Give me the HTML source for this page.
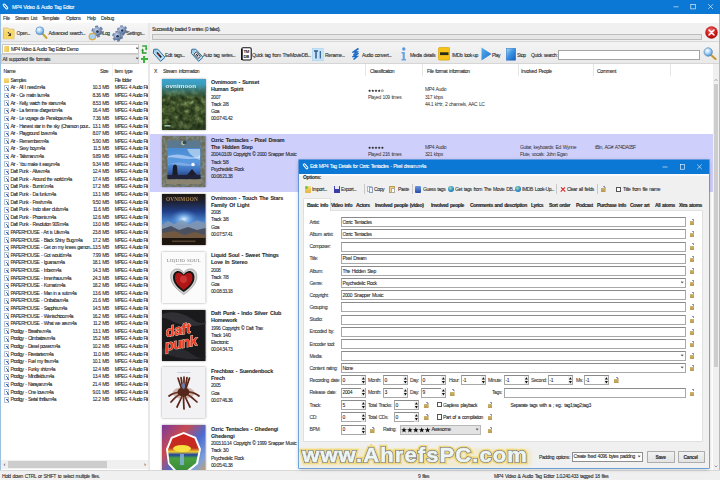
<!DOCTYPE html>
<html><head><meta charset="utf-8">
<style>
*{box-sizing:border-box;margin:0;padding:0}
html,body{width:720px;height:480px;overflow:hidden;background:#f0f0f0;font-family:"Liberation Sans",sans-serif;font-size:5px;letter-spacing:-0.38px;word-spacing:0.8px;color:#2a2a2a;position:relative}
.a{position:absolute}
.t{position:absolute;white-space:nowrap;line-height:5px}
.t,.st,.fr span{-webkit-text-stroke:0.08px currentColor}
/* title bar */
#title{left:0;top:0;width:720px;height:13.5px;background:#0a78d4}
#title .tt{left:12px;top:5.1px;color:#fff;font-size:5.2px;letter-spacing:-0.4px}
#menu{left:0;top:13.5px;width:720px;height:9px;background:#fff}
#menu .t{top:2.5px}
#winl{left:0;top:13.5px;width:1px;height:467px;background:#9cc0e0}
#winr{left:719px;top:13.5px;width:1px;height:467px;background:#9cc0e0}
/* left toolbar */
#ltb{left:1px;top:22.5px;width:147px;height:19.5px;background:linear-gradient(#f7f7f7,#ececec);border-bottom:1px solid #dadada}
#ltb .t{top:8px;}
#rtb1{left:150px;top:22.5px;width:569px;height:19.5px;background:#f0f0f0;border-bottom:1px solid #dadada}
#combo1{left:2px;top:43.5px;width:137px;height:10px;background:#fff;border:0.6px solid #c8c8c8}
#combo2{left:1px;top:53.5px;width:138px;height:10px;background:#e4e4e4;border:0.6px solid #d0d0d0}
.dd{position:absolute;width:2.4px;height:2.4px;border-right:0.6px solid #606060;border-bottom:0.6px solid #606060;transform:rotate(45deg)}
/* left list */
#llist{left:1px;top:64px;width:147px;height:405.5px;background:#fff}
#lhdr{left:0;top:0;width:147px;height:12px;background:#fff}
.fr{position:absolute;left:0;width:147px;height:7.6px}
.fr .fn,.fr .fs,.fr .ft{position:absolute;top:1.3px;white-space:nowrap;line-height:5px;}
.fr .fn{left:9.4px;letter-spacing:-0.55px}
.fr .fs{right:39.2px;letter-spacing:-0.45px}
.fr .ft{left:113.8px;letter-spacing:-0.6px}
.fold{position:absolute;left:3.4px;top:1.1px;width:5px;height:5px;background:linear-gradient(#f8e08a,#eec44e);border-radius:0.4px}
.note{position:absolute;left:3.4px;top:0.9px;width:4.6px;height:5.8px;background:linear-gradient(#fff,#fff) 0 0/100% 100%;border:0.4px solid #b8c4d4}
.note:after{content:"";position:absolute;left:0.6px;top:1px;width:2.6px;height:3.6px;background:linear-gradient(60deg,transparent 0 38%,#3a6cc0 40% 62%,transparent 64%)}
#hscroll{left:1px;top:460px;width:147px;height:9px;background:#f0f0f0}
/* splitter */
#split{left:148px;top:22.5px;width:2px;height:447px;background:#e8e8e8}
/* right toolbar */
#rtb2{left:150px;top:42.5px;width:569px;height:21.5px;background:linear-gradient(#f4f4f4,#e9e9e9);border-bottom:1px solid #d6d6d6}
#rtb2 .t{top:10.2px}
/* stream list */
#slist{left:150px;top:64px;width:563px;height:406px;background:#fff;overflow:hidden}
#shdr{left:0;top:0;width:563px;height:13px;background:#fff}
#shdr .t{top:4.8px;}
.hsep{position:absolute;top:0;width:0.7px;height:13px;background:#e5e5e5}
.sr{position:absolute;left:0;width:563px;height:57.75px;background:#fff}
.sr.sel{background:#cfcffc}
.art{position:absolute;left:12.4px;top:2.5px;width:43.5px;height:51px;filter:drop-shadow(0.7px 0.9px 0.8px rgba(0,0,0,.4))}
.st{position:absolute;left:61px;white-space:nowrap;line-height:5px;letter-spacing:-0.46px}
.st b{font-size:5.4px;letter-spacing:-0.17px}
.sc{position:absolute;white-space:nowrap;line-height:5px;color:#333;letter-spacing:-0.42px}
#vscroll{left:713px;top:77px;width:6px;height:393px;background:#f0f0f0}
/* status bar */
#status{left:0;top:469.5px;width:720px;height:10.5px;background:#f0f0f0;border-top:0.6px solid #d8d8d8}
#status .t{top:3px;}

.fld{background:#fff;border:0.6px solid #a8a8a8;border-top-color:#8a8a8a}
.lb{color:#3a3a3a}
.br{position:absolute;width:4.6px;height:6.6px;background:linear-gradient(#c0b060,#b88a3a) 0 2.2px/4.6px 4.4px no-repeat,linear-gradient(45deg,transparent 0 40%,#8a8ab8 41% 70%,transparent 71%) 2.4px 0/2.6px 2.6px no-repeat;opacity:.9}
.btn{background:linear-gradient(#f2f2f2,#e2e2e2);border:0.6px solid #adadad;border-radius:0.6px}
.tab{font-weight:bold;letter-spacing:-0.38px;-webkit-text-stroke:0.15px #222}
.a1{background:radial-gradient(ellipse at 30% 55%,rgba(120,150,90,.7),transparent 35%),radial-gradient(ellipse at 70% 70%,rgba(100,130,80,.6),transparent 35%),linear-gradient(#47a6c6 0%,#3f93ab 14%,#3f7358 26%,#355a36 45%,#2c4a2c 70%,#203722 100%)}
.a2{background:radial-gradient(circle at 71% 55%,#e8f0ff 0 5%,transparent 7%),linear-gradient(160deg,transparent 60%,#1a1c2c 61%) 0 0/100% 100% no-repeat,linear-gradient(#3a66c0,#5d8fe0 40%,#3c6ad0 70%,#2a2a50 100%);border:5px solid #8f8570;border-bottom-width:7px}
.a3{background:radial-gradient(ellipse at 50% 45%,#9cc4f0 0,#4a7ad0 25%,transparent 60%),linear-gradient(#2a2018 0%,#24345a 20%,#3a68c0 45%,#6a8ab0 60%,#7a6a50 72%,#4a3a28 88%,#1a140e 100%)}
.a4{background:radial-gradient(ellipse at 50% 57%,#c02020 0 22%,#181818 24% 27%,#c8c8c8 29% 33%,#fff 35%),#fff}
.a5{background:radial-gradient(ellipse at 40% 20%,#444 0,#1a1a1a 40%),#161616}
.a6{background:radial-gradient(ellipse at 50% 55%,#3a1a12 0,#7a4a34 14%,rgba(170,120,100,.6) 28%,transparent 40%),linear-gradient(#f4f4f6,#ececee)}
.a7{background:radial-gradient(ellipse at 45% 50%,#f8e040 0 10%,#e03020 18%,#2aa040 30%,#fff 36% 40%,transparent 42%),linear-gradient(135deg,#6a3aa0,#c84a60 30%,#4a6ac8 60%,#a0a040)}
.wm{left:302.2px;top:442.2px;font-size:22px;line-height:28px;font-weight:bold;letter-spacing:1.1px;transform:scaleY(0.88);transform-origin:50% 50%;word-spacing:0;stroke-linejoin:round}
</style></head><body>
<div id="title" class="a">
  <div class="a" style="left:3.5px;top:3px;width:3px;height:7px;border:1px solid #fff;border-radius:2px;transform:rotate(-40deg)"></div>
  <div class="t tt">MP4 Video &amp; Audio Tag Editor</div>
  <svg class="a" style="left:670px;top:0" width="50" height="13.5" viewBox="0 0 50 13.5"><path d="M3.5 6.8 H8.5" stroke="#fff" stroke-width=".6"/><rect x="20.8" y="4.3" width="4.6" height="4.6" fill="none" stroke="#fff" stroke-width=".6"/><path d="M38.2 4.2 L43 9 M43 4.2 L38.2 9" stroke="#fff" stroke-width=".6"/></svg>
</div>
<div id="menu" class="a">
  <div class="t" style="left:3px">File</div>
  <div class="t" style="left:15px">Stream List</div>
  <div class="t" style="left:42px">Template</div>
  <div class="t" style="left:66px">Options</div>
  <div class="t" style="left:87px">Help</div>
  <div class="t" style="left:101px">Debug</div>
</div>
<div id="winl" class="a"></div>
<div id="ltb" class="a">
  <svg class="a" style="left:0;top:0" width="147" height="19.5" viewBox="0 0 147 19.5"><defs><radialGradient id="gr" cx=".4" cy=".35" r=".7"><stop offset="0" stop-color="#c8d6ea"/><stop offset=".6" stop-color="#7890b8"/><stop offset="1" stop-color="#4a5e88"/></radialGradient><radialGradient id="mg2" cx=".4" cy=".35" r=".7"><stop offset="0" stop-color="#ffffff"/><stop offset=".5" stop-color="#a6d2f4"/><stop offset="1" stop-color="#3e8ad0"/></radialGradient><linearGradient id="fo" x1="0" y1="0" x2="0" y2="1"><stop offset="0" stop-color="#fbe9a0"/><stop offset="1" stop-color="#e8b830"/></linearGradient></defs>
  <path d="M2.5 5 H7 L8 6.2 H13 V15.8 H2.5Z" fill="url(#fo)" stroke="#c89a28" stroke-width=".5"/>
  <path d="M3.5 7.5 H13.8 L12.8 16 H2.5Z" fill="#f6d868" opacity=".9"/>
  <path d="M7 9 L9.5 12.5 M7.3 12.6 L9.5 12.5 L9.6 10.3" stroke="#3a3020" stroke-width="1" fill="none"/>
  <path d="M40.5 9.5 L45.5 15" stroke="#c8a438" stroke-width="2" stroke-linecap="round"/>
  <circle cx="38.8" cy="7.8" r="4" fill="url(#mg2)" stroke="#5a8ab8" stroke-width=".6"/>
  
  
  
  <circle cx="96.4" cy="8.6" r="5.15" fill="none" stroke="#6a80a8" stroke-width="1.68" stroke-dasharray="3.08 2.24"/><circle cx="96.4" cy="8.6" r="4.48" fill="url(#gr)"/><circle cx="96.4" cy="8.6" r="1.40" fill="#2a3450"/><circle cx="91.4" cy="13.6" r="3.3" fill="#a8d0f0" stroke="#e0a838" stroke-width="1.1"/><circle cx="121.2" cy="7.4" r="4.51" fill="none" stroke="#6a80a8" stroke-width="1.47" stroke-dasharray="2.70 1.96"/><circle cx="121.2" cy="7.4" r="3.92" fill="url(#gr)"/><circle cx="121.2" cy="7.4" r="1.23" fill="#2a3450"/><circle cx="116.6" cy="13.2" r="4.69" fill="none" stroke="#6a80a8" stroke-width="1.53" stroke-dasharray="2.81 2.04"/><circle cx="116.6" cy="13.2" r="4.08" fill="url(#gr)"/><circle cx="116.6" cy="13.2" r="1.27" fill="#2a3450"/></svg>
  <div class="t" style="left:15.5px">Open...</div>
  <div class="t" style="left:47.5px">Advanced search...</div>
  <div class="t" style="left:101.5px">Log</div>
  <div class="t" style="left:125.5px">Settings...</div>
</div>
<div id="rtb1" class="a">
  <div class="t" style="left:2px;top:4.5px;letter-spacing:-0.56px">Successfully loaded 9 entries (0 failed).</div>
  <div class="a" style="left:1.5px;top:11.5px;width:550px;height:5.5px;background:#e6e6e6;border:0.6px solid #bdbdbd"></div>
  <svg class="a" style="left:554.5px;top:3px" width="13" height="13" viewBox="0 0 13 13"><defs><radialGradient id="rx" cx=".45" cy=".35" r=".65"><stop offset="0" stop-color="#f47a7a"/><stop offset=".6" stop-color="#d41c1c"/><stop offset="1" stop-color="#a00c0c"/></radialGradient></defs><circle cx="6.5" cy="6.5" r="6" fill="url(#rx)" stroke="#b01010" stroke-width=".4"/><path d="M4 4 L9 9 M9 4 L4 9" stroke="#fff" stroke-width="1.5" stroke-linecap="round"/></svg>
</div>
<div id="combo1" class="a">
  <div class="a" style="left:1.2px;top:1.4px;width:4.6px;height:6.6px;background:linear-gradient(90deg,#f6dc80,#eec44e);border-radius:0.4px"></div>
  <div class="t" style="left:8px;top:2.2px;letter-spacing:-0.55px;word-spacing:0.6px">MP4 Video &amp; Audio Tag Editor Demo</div>
  <div class="dd" style="left:132.5px;top:2.8px"></div>
</div>
<div id="combo2" class="a">
  <div class="t" style="left:0.5px;top:2.3px;">All supported file formats</div>
  <div class="dd" style="left:133.5px;top:2.8px"></div>
</div>
<svg class="a" style="left:140.5px;top:44.5px" width="7" height="9" viewBox="0 0 7 9"><path d="M1.2 1 H5.2 L5.2 4.2" fill="none" stroke="#34a834" stroke-width="1.5"/><path d="M3.8 3.6 L5.2 5.4 L6.6 3.6Z" fill="#34a834"/><path d="M5.6 8 H1.6 L1.6 4.8" fill="none" stroke="#2c962c" stroke-width="1.5"/><path d="M0.2 5.4 L1.6 3.6 L3 5.4Z" fill="#2c962c"/></svg>
<div class="a" style="left:143.2px;top:55.5px;width:1.8px;height:7px;background:#3bb43b"></div>
<div class="a" style="left:140.6px;top:58.1px;width:7px;height:1.8px;background:#3bb43b"></div>
<div id="llist" class="a">
  <div id="lhdr" class="a">
    <div class="t" style="left:2.5px;top:4.8px">Name</div>
    <div class="t" style="left:99px;top:4.8px">Size</div>
    <div class="t" style="left:113.5px;top:4.8px">Item type</div>
    <div class="a" style="left:111px;top:0;width:0.6px;height:12px;background:#f2f2f2"></div>
    
  </div>
  <div class="a" style="left:0;top:12.6px;width:147px;height:340px">
<div class="fr" style="top:0.00px"><i class="fold"></i><span class="fn">Samples</span><span class="fs"></span><span class="ft">File folder</span></div>
<div class="fr" style="top:7.60px"><i class="note"></i><span class="fn">Air - All I need.m4a</span><span class="fs">10.3 MB</span><span class="ft">MPEG 4 Audio File</span></div>
<div class="fr" style="top:15.21px"><i class="note"></i><span class="fn">Air - Ce matin la.m4a</span><span class="fs">8.36 MB</span><span class="ft">MPEG 4 Audio File</span></div>
<div class="fr" style="top:22.81px"><i class="note"></i><span class="fn">Air - Kelly, watch the stars.m4a</span><span class="fs">8.53 MB</span><span class="ft">MPEG 4 Audio File</span></div>
<div class="fr" style="top:30.42px"><i class="note"></i><span class="fn">Air - La femme d'argent.m4a</span><span class="fs">16.4 MB</span><span class="ft">MPEG 4 Audio File</span></div>
<div class="fr" style="top:38.02px"><i class="note"></i><span class="fn">Air - Le voyage de Penelope.m4a</span><span class="fs">7.36 MB</span><span class="ft">MPEG 4 Audio File</span></div>
<div class="fr" style="top:45.63px"><i class="note"></i><span class="fn">Air - Harvest star in the sky (Chanson pour...</span><span class="fs">13.1 MB</span><span class="ft">MPEG 4 Audio File</span></div>
<div class="fr" style="top:53.23px"><i class="note"></i><span class="fn">Air - Playground love.m4a</span><span class="fs">8.07 MB</span><span class="ft">MPEG 4 Audio File</span></div>
<div class="fr" style="top:60.84px"><i class="note"></i><span class="fn">Air - Remember.m4a</span><span class="fs">5.90 MB</span><span class="ft">MPEG 4 Audio File</span></div>
<div class="fr" style="top:68.45px"><i class="note"></i><span class="fn">Air - Sexy boy.m4a</span><span class="fs">11.5 MB</span><span class="ft">MPEG 4 Audio File</span></div>
<div class="fr" style="top:76.05px"><i class="note"></i><span class="fn">Air - Talisman.m4a</span><span class="fs">9.89 MB</span><span class="ft">MPEG 4 Audio File</span></div>
<div class="fr" style="top:83.65px"><i class="note"></i><span class="fn">Air - You make it easy.m4a</span><span class="fs">9.34 MB</span><span class="ft">MPEG 4 Audio File</span></div>
<div class="fr" style="top:91.26px"><i class="note"></i><span class="fn">Daft Punk - Alive.m4a</span><span class="fs">12.4 MB</span><span class="ft">MPEG 4 Audio File</span></div>
<div class="fr" style="top:98.87px"><i class="note"></i><span class="fn">Daft Punk - Around the world.m4a</span><span class="fs">17.4 MB</span><span class="ft">MPEG 4 Audio File</span></div>
<div class="fr" style="top:106.47px"><i class="note"></i><span class="fn">Daft Punk - Burnin'.m4a</span><span class="fs">17.2 MB</span><span class="ft">MPEG 4 Audio File</span></div>
<div class="fr" style="top:114.08px"><i class="note"></i><span class="fn">Daft Punk - Da funk.m4a</span><span class="fs">13.1 MB</span><span class="ft">MPEG 4 Audio File</span></div>
<div class="fr" style="top:121.68px"><i class="note"></i><span class="fn">Daft Punk - Fresh.m4a</span><span class="fs">9.50 MB</span><span class="ft">MPEG 4 Audio File</span></div>
<div class="fr" style="top:129.28px"><i class="note"></i><span class="fn">Daft Punk - Indo silver club.m4a</span><span class="fs">11.6 MB</span><span class="ft">MPEG 4 Audio File</span></div>
<div class="fr" style="top:136.89px"><i class="note"></i><span class="fn">Daft Punk - Phoenix.m4a</span><span class="fs">12.6 MB</span><span class="ft">MPEG 4 Audio File</span></div>
<div class="fr" style="top:144.49px"><i class="note"></i><span class="fn">Daft Punk - Revolution 909.m4a</span><span class="fs">13.0 MB</span><span class="ft">MPEG 4 Audio File</span></div>
<div class="fr" style="top:152.10px"><i class="note"></i><span class="fn">PAPERHOUSE - Art is Life.m4a</span><span class="fs">23.8 MB</span><span class="ft">MPEG 4 Audio File</span></div>
<div class="fr" style="top:159.71px"><i class="note"></i><span class="fn">PAPERHOUSE - Black Shiny Bug.m4a</span><span class="fs">17.2 MB</span><span class="ft">MPEG 4 Audio File</span></div>
<div class="fr" style="top:167.31px"><i class="note"></i><span class="fn">PAPERHOUSE - Get on my knees gamon...</span><span class="fs">13.5 MB</span><span class="ft">MPEG 4 Audio File</span></div>
<div class="fr" style="top:174.92px"><i class="note"></i><span class="fn">PAPERHOUSE - Got would.m4a</span><span class="fs">7.99 MB</span><span class="ft">MPEG 4 Audio File</span></div>
<div class="fr" style="top:182.52px"><i class="note"></i><span class="fn">PAPERHOUSE - Iguana.m4a</span><span class="fs">18.1 MB</span><span class="ft">MPEG 4 Audio File</span></div>
<div class="fr" style="top:190.13px"><i class="note"></i><span class="fn">PAPERHOUSE - Inber.m4a</span><span class="fs">14.3 MB</span><span class="ft">MPEG 4 Audio File</span></div>
<div class="fr" style="top:197.73px"><i class="note"></i><span class="fn">PAPERHOUSE - Innenhaus.m4a</span><span class="fs">24.3 MB</span><span class="ft">MPEG 4 Audio File</span></div>
<div class="fr" style="top:205.34px"><i class="note"></i><span class="fn">PAPERHOUSE - Kumari.m4a</span><span class="fs">18.2 MB</span><span class="ft">MPEG 4 Audio File</span></div>
<div class="fr" style="top:212.94px"><i class="note"></i><span class="fn">PAPERHOUSE - Man in a suit.m4a</span><span class="fs">13.6 MB</span><span class="ft">MPEG 4 Audio File</span></div>
<div class="fr" style="top:220.54px"><i class="note"></i><span class="fn">PAPERHOUSE - Onibaba.m4a</span><span class="fs">21.6 MB</span><span class="ft">MPEG 4 Audio File</span></div>
<div class="fr" style="top:228.15px"><i class="note"></i><span class="fn">PAPERHOUSE - Sapphis.m4a</span><span class="fs">14.5 MB</span><span class="ft">MPEG 4 Audio File</span></div>
<div class="fr" style="top:235.76px"><i class="note"></i><span class="fn">PAPERHOUSE - Wenischtoo.m4a</span><span class="fs">16.2 MB</span><span class="ft">MPEG 4 Audio File</span></div>
<div class="fr" style="top:243.36px"><i class="note"></i><span class="fn">PAPERHOUSE - What we are.m4a</span><span class="fs">11.2 MB</span><span class="ft">MPEG 4 Audio File</span></div>
<div class="fr" style="top:250.96px"><i class="note"></i><span class="fn">Prodigy - Breathe.m4a</span><span class="fs">13.1 MB</span><span class="ft">MPEG 4 Audio File</span></div>
<div class="fr" style="top:258.57px"><i class="note"></i><span class="fn">Prodigy - Climbatize.m4a</span><span class="fs">15.2 MB</span><span class="ft">MPEG 4 Audio File</span></div>
<div class="fr" style="top:266.17px"><i class="note"></i><span class="fn">Prodigy - Diesel power.m4a</span><span class="fs">10.2 MB</span><span class="ft">MPEG 4 Audio File</span></div>
<div class="fr" style="top:273.78px"><i class="note"></i><span class="fn">Prodigy - Firestarter.m4a</span><span class="fs">11.0 MB</span><span class="ft">MPEG 4 Audio File</span></div>
<div class="fr" style="top:281.39px"><i class="note"></i><span class="fn">Prodigy - Fuel my fire.m4a</span><span class="fs">10.1 MB</span><span class="ft">MPEG 4 Audio File</span></div>
<div class="fr" style="top:288.99px"><i class="note"></i><span class="fn">Prodigy - Funky shit.m4a</span><span class="fs">12.4 MB</span><span class="ft">MPEG 4 Audio File</span></div>
<div class="fr" style="top:296.60px"><i class="note"></i><span class="fn">Prodigy - Mindfields.m4a</span><span class="fs">13.4 MB</span><span class="ft">MPEG 4 Audio File</span></div>
<div class="fr" style="top:304.20px"><i class="note"></i><span class="fn">Prodigy - Narayan.m4a</span><span class="fs">21.4 MB</span><span class="ft">MPEG 4 Audio File</span></div>
<div class="fr" style="top:311.80px"><i class="note"></i><span class="fn">Prodigy - One love.m4a</span><span class="fs">9.01 MB</span><span class="ft">MPEG 4 Audio File</span></div>
<div class="fr" style="top:319.41px"><i class="note"></i><span class="fn">Prodigy - Serial thrilla.m4a</span><span class="fs">12.2 MB</span><span class="ft">MPEG 4 Audio File</span></div>
  </div>
</div>
<div id="hscroll" class="a">
  <div class="a" style="left:7px;top:1.2px;width:99px;height:6.5px;background:#cdcdcd"></div>
  <div class="t" style="left:2.4px;top:1.6px;font-size:6px;color:#505050">&#8249;</div>
  <div class="t" style="left:143px;top:1.6px;font-size:6px;color:#505050">&#8250;</div>
</div>
<div id="split" class="a"></div>
<div id="rtb2" class="a">
  <svg class="a" style="left:1.5px;top:4.5px" width="13" height="15" viewBox="0 0 13 15"><g transform="rotate(-42 6.5 7.5)"><path d="M3.5 3 L6.5 0.5 L9.5 3 L9.5 14 L3.5 14Z" fill="#b6dcf4" stroke="#2d6c9c" stroke-width="0.9"/><circle cx="6.5" cy="3" r="0.8" fill="#fff" stroke="#2d6c9c" stroke-width=".4"/><rect x="5.8" y="5" width="1.6" height="6.5" fill="#1e1e1e"/><rect x="5.8" y="7.3" width="1.6" height="1.2" fill="#c03030"/></g></svg>
  <div class="t" style="left:15px">Edit tags...</div>
  <svg class="a" style="left:39.5px;top:4.5px" width="13" height="15" viewBox="0 0 13 15"><g transform="rotate(-42 6.5 7.5)"><path d="M3.5 3 L6.5 0.5 L9.5 3 L9.5 14 L3.5 14Z" fill="#b6dcf4" stroke="#2d6c9c" stroke-width="0.9"/><circle cx="6.5" cy="3" r="0.8" fill="#fff" stroke="#2d6c9c" stroke-width=".4"/><rect x="4.8" y="5.5" width="3.4" height="6" fill="#f4f4f4" stroke="#222" stroke-width=".8"/><rect x="5.9" y="7" width="1.2" height="3" fill="#222"/></g></svg>
  <div class="t" style="left:53px">Auto tag series...</div>
  <svg class="a" style="left:90.5px;top:4.2px" width="11" height="14" viewBox="0 0 11 14"><rect x="0.8" y="0.8" width="9.4" height="12.2" rx="1.2" fill="#fff" stroke="#111" stroke-width="1.1"/><path d="M0.8 13 L0.8 2" stroke="#111" stroke-width="1.6"/><text x="2.6" y="6" font-family="Liberation Sans" font-size="4.2" font-weight="bold" fill="#111" letter-spacing="-0.3">TM</text><text x="2.6" y="10.6" font-family="Liberation Sans" font-size="4.2" font-weight="bold" fill="#111" letter-spacing="-0.3">DB</text></svg>
  <div class="t" style="left:102px">Quick tag from TheMovieDB...</div>
  <svg class="a" style="left:162.3px;top:5px" width="11.5" height="13" viewBox="0 0 11.5 13"><rect x="0.3" y="0.3" width="10.9" height="12.4" fill="#c6e4f8" stroke="#a8d0ec" stroke-width=".6"/><path d="M2 3 H6 M4 3 V10.5" stroke="#2e5e8e" stroke-width="1.5"/><path d="M8.3 3 V10.5" stroke="#2e5e8e" stroke-width="1.2"/></svg>
  <div class="t" style="left:175px">Rename...</div>
  <svg class="a" style="left:201.5px;top:4.8px" width="8" height="14" viewBox="0 0 8 14"><path d="M6.5 1.5 L1.5 5 L5 5 L1.5 8" stroke="#1e6cc8" stroke-width="1.6" fill="none"/><path d="M6.5 6 L1.5 9.5 L5 9.5 L1.5 12.5" stroke="#1e6cc8" stroke-width="1.6" fill="none"/></svg>
  <div class="t" style="left:212px">Audio convert...</div>
  <svg class="a" style="left:249.5px;top:4.2px" width="7" height="14" viewBox="0 0 7 14"><circle cx="3.8" cy="2" r="1.7" fill="#5e98dc"/><path d="M1.5 5 H4.8 V12 H6 V13.5 H1.5 V12 H2.7 V6.4 H1.5Z" fill="#6aa2e2"/></svg>
  <div class="t" style="left:260px">Media details</div>
  <svg class="a" style="left:287.5px;top:4.5px" width="12.5" height="13.5" viewBox="0 0 12.5 13.5"><rect x="0.4" y="0.4" width="11.7" height="12.7" rx="1.5" fill="#f6c21a" stroke="#d9a200" stroke-width=".7"/><rect x="2" y="5.3" width="8.5" height="2.8" fill="#2a2a1a"/></svg>
  <div class="t" style="left:302px">IMDb look-up</div>
  <svg class="a" style="left:330.5px;top:4.5px" width="11" height="14" viewBox="0 0 11 14"><defs><linearGradient id="pl" x1="0" y1="0" x2="1" y2="1"><stop offset="0" stop-color="#5ab0f0"/><stop offset="1" stop-color="#1a6ccc"/></linearGradient></defs><path d="M0.5 0.5 L10.5 7 L0.5 13.5Z" fill="url(#pl)"/></svg>
  <div class="t" style="left:342px">Play</div>
  <svg class="a" style="left:355.5px;top:5.8px" width="10" height="12.5" viewBox="0 0 10 12.5"><defs><linearGradient id="sp" x1="0" y1="0" x2="1" y2="1"><stop offset="0" stop-color="#a8daf8"/><stop offset=".45" stop-color="#3c94e4"/><stop offset="1" stop-color="#1458b8"/></linearGradient></defs><rect x="0.3" y="0.3" width="9.4" height="11.9" fill="url(#sp)" stroke="#2a70c0" stroke-width=".5"/></svg>
  <div class="t" style="left:367px">Stop</div>
  <div class="t" style="left:381px">Quick search:</div>
  <div class="a" style="left:408px;top:7.5px;width:142px;height:9.5px;background:#fff;border:0.6px solid #a4a4a4"></div>
  <svg class="a" style="left:552.5px;top:4.8px" width="14" height="13" viewBox="0 0 14 13"><defs><radialGradient id="mg" cx=".4" cy=".35" r=".7"><stop offset="0" stop-color="#ffffff"/><stop offset=".5" stop-color="#a6d2f4"/><stop offset="1" stop-color="#3e8ad0"/></radialGradient></defs><path d="M7.5 7.5 L12.5 12" stroke="#c49a30" stroke-width="2.2" stroke-linecap="round"/><circle cx="5.2" cy="5" r="4.2" fill="url(#mg)" stroke="#5a8ab8" stroke-width=".7"/></svg>

</div>
<div id="slist" class="a">
  <div id="shdr" class="a">
    <div class="t" style="left:4px">X</div>
    <div class="t" style="left:13px">Stream information</div>
    <div class="t" style="left:220px">Classification</div>
    <div class="t" style="left:277px">File format information</div>
    <div class="t" style="left:371px">Involved People</div>
    <div class="t" style="left:447px">Comment</div>
    
    <div class="hsep" style="left:215px"></div>
    <div class="hsep" style="left:272px"></div>
    <div class="hsep" style="left:368px"></div>
    <div class="hsep" style="left:443px"></div>
    <div class="hsep" style="left:520px"></div>
  </div>
  <div class="a" style="left:0;top:0;width:563px;height:406px">
<div class="sr" style="top:12.00px">
<svg class="art" width="43.5" height="51" viewBox="0 0 87 102" preserveAspectRatio="none"><defs>
<linearGradient id="g1" x1="0" y1="0" x2="0" y2="1"><stop offset="0" stop-color="#3aa4d0"/><stop offset=".12" stop-color="#3c9ab8"/><stop offset=".26" stop-color="#3c8080" stop-opacity=".5"/><stop offset=".4" stop-color="#2c4a2c" stop-opacity="0"/><stop offset=".85" stop-color="#1a2a18" stop-opacity=".1"/><stop offset="1" stop-color="#1a2a18" stop-opacity=".5"/></linearGradient>
<filter id="tx1" x="0" y="0" width="100%" height="100%" color-interpolation-filters="sRGB"><feTurbulence type="fractalNoise" baseFrequency="0.09" numOctaves="3" seed="5"/><feColorMatrix values="1 0 0 0 0  1 0 0 0 0  1 0 0 0 0  0 0 0 0 1"/><feComponentTransfer><feFuncR type="table" tableValues="0.06 0.14 0.24 0.42 0.75"/><feFuncG type="table" tableValues="0.1 0.2 0.32 0.5 0.8"/><feFuncB type="table" tableValues="0.05 0.1 0.16 0.3 0.65"/><feFuncA type="table" tableValues="1 1"/></feComponentTransfer><feComposite in2="SourceGraphic" operator="in"/></filter>
</defs>
<rect width="87" height="102" fill="#34502e"/>
<rect y="14" width="87" height="88" filter="url(#tx1)"/>
<rect width="87" height="102" fill="url(#g1)"/>
<text x="7" y="17" font-family="Liberation Sans" font-size="12.5" fill="#d8f0f4" font-weight="bold" letter-spacing="0.2">ovnimoon</text>
<rect x="5" y="92" width="12" height="3" fill="#cfe" opacity=".7"/>
</svg>
<div class="st" style="top:4.2px"><b>Ovnimoon - Sunset</b></div>
<div class="st" style="top:11.2px"><b>Human Spirit</b></div>
<div class="st" style="top:18.5px">2007</div>
<div class="st" style="top:25.8px">Track 2/8</div>
<div class="st" style="top:33.0px">Goa</div>
<div class="st" style="top:40.2px">00:07:41.42</div>
<svg class="a" style="left:218px;top:12.6px" width="16.5" height="3.6" viewBox="0 0 16.5 3.6"><polygon points="1.60,0.20 1.98,1.27 3.12,1.31 2.22,2.00 2.54,3.09 1.60,2.45 0.66,3.09 0.98,2.00 0.08,1.31 1.22,1.27" fill="#222"/><polygon points="4.80,0.20 5.18,1.27 6.32,1.31 5.42,2.00 5.74,3.09 4.80,2.45 3.86,3.09 4.18,2.00 3.28,1.31 4.42,1.27" fill="#222"/><polygon points="8.00,0.20 8.38,1.27 9.52,1.31 8.62,2.00 8.94,3.09 8.00,2.45 7.06,3.09 7.38,2.00 6.48,1.31 7.62,1.27" fill="#222"/><polygon points="11.20,0.20 11.58,1.27 12.72,1.31 11.82,2.00 12.14,3.09 11.20,2.45 10.26,3.09 10.58,2.00 9.68,1.31 10.82,1.27" fill="#222"/><polygon points="14.40,0.35 14.75,1.31 15.78,1.35 14.97,1.99 15.25,2.97 14.40,2.40 13.55,2.97 13.83,1.99 13.02,1.35 14.05,1.31" fill="none" stroke="#444" stroke-width=".35"/></svg>
<div class="sc" style="top:18.5px;left:218px">Played 109 times</div>
<div class="sc" style="top:11.2px;left:275px">MP4 Audio</div>
<div class="sc" style="top:18.5px;left:275px">317 kbps</div>
<div class="sc" style="top:25.7px;left:275px">44.1 kHz, 2 channels, AAC LC</div>
</div>
<div class="sr sel" style="top:69.75px">
<svg class="art" width="43.5" height="51" viewBox="0 0 87 102" preserveAspectRatio="none"><defs>
<linearGradient id="g2" x1="0" y1="0" x2="0" y2="1"><stop offset="0" stop-color="#4a8ad0"/><stop offset=".45" stop-color="#5a9ae0"/><stop offset=".75" stop-color="#3a6ab8"/><stop offset="1" stop-color="#202850"/></linearGradient>
<filter id="tx2" x="0" y="0" width="100%" height="100%" color-interpolation-filters="sRGB"><feTurbulence type="fractalNoise" baseFrequency="0.15" numOctaves="2" seed="7"/><feColorMatrix values="0 0 0 0 0.55  0 0 0 0 0.75  0 0 0 0 0.8  0 0 0 -2 1.3"/><feComposite in2="SourceGraphic" operator="in"/></filter>
</defs>
<rect width="87" height="102" fill="#6e6a58"/>
<rect width="87" height="102" filter="url(#tx2)" opacity=".5"/>
<rect x="10" y="9" width="67" height="15" fill="#5a7890"/>
<circle cx="43" cy="14" r="4.5" fill="#c8d0a0"/><circle cx="45" cy="13" r="3.8" fill="#3a4a58"/>
<rect x="11" y="24" width="66" height="62" fill="url(#g2)"/>
<path d="M12 40 Q30 34 50 40 T76 38 L76 44 Q55 48 30 44 T12 46Z" fill="#cfe0ff" opacity=".6"/><path d="M50 26 L76 26 L76 48 Q64 44 56 36 Q52 30 50 26Z" fill="#e8f2ff" opacity=".55"/>
<path d="M12 56 Q35 50 55 56 T76 54 L76 58 Q50 62 30 58 T12 60Z" fill="#a8c4f4" opacity=".5"/>
<circle cx="62" cy="57" r="3.5" fill="#f4f8ff"/>
<path d="M20 86 L22 60 Q26 54 30 60 L32 86Z" fill="#1a1c28"/>
<path d="M44 86 L60 66 L76 86Z" fill="#1c1e2c"/>
<rect x="11" y="78" width="66" height="8" fill="#20223a"/>
<rect x="8" y="88" width="71" height="8" fill="#8a8470"/>
</svg>
<div class="st" style="top:4.2px"><b>Ozric Tentacles - Pixel Dream</b></div>
<div class="st" style="top:11.2px"><b>The Hidden Step</b></div>
<div class="st" style="top:18.5px">2004.03.09 Copyright &copy; 2000 Snapper Music</div>
<div class="st" style="top:25.8px">Track 5/8</div>
<div class="st" style="top:33.0px">Psychedelic Rock</div>
<div class="st" style="top:40.2px">00:08:21.38</div>
<svg class="a" style="left:218px;top:12.6px" width="16.5" height="3.6" viewBox="0 0 16.5 3.6"><polygon points="1.60,0.20 1.98,1.27 3.12,1.31 2.22,2.00 2.54,3.09 1.60,2.45 0.66,3.09 0.98,2.00 0.08,1.31 1.22,1.27" fill="#222"/><polygon points="4.80,0.20 5.18,1.27 6.32,1.31 5.42,2.00 5.74,3.09 4.80,2.45 3.86,3.09 4.18,2.00 3.28,1.31 4.42,1.27" fill="#222"/><polygon points="8.00,0.20 8.38,1.27 9.52,1.31 8.62,2.00 8.94,3.09 8.00,2.45 7.06,3.09 7.38,2.00 6.48,1.31 7.62,1.27" fill="#222"/><polygon points="11.20,0.20 11.58,1.27 12.72,1.31 11.82,2.00 12.14,3.09 11.20,2.45 10.26,3.09 10.58,2.00 9.68,1.31 10.82,1.27" fill="#222"/><polygon points="14.40,0.20 14.78,1.27 15.92,1.31 15.02,2.00 15.34,3.09 14.40,2.45 13.46,3.09 13.78,2.00 12.88,1.31 14.02,1.27" fill="#222"/></svg>
<div class="sc" style="top:18.5px;left:218px">Played 216 times</div>
<div class="sc" style="top:11.2px;left:275px">MP4 Audio</div>
<div class="sc" style="top:18.5px;left:275px">321 kbps</div>
<div class="sc" style="top:11.2px;left:370px">Guitar, keyboards: Ed Wynne</div>
<div class="sc" style="top:18.5px;left:370px">Flute, vocals: John Egan</div>
<div class="sc" style="top:11.2px;left:445px">tBin, AG# A74DA05F</div>
</div>
<div class="sr" style="top:127.50px">
<svg class="art" width="43.5" height="51" viewBox="0 0 87 102" preserveAspectRatio="none"><defs>
<linearGradient id="g3" x1="0" y1="0" x2="0" y2="1"><stop offset="0" stop-color="#201810"/><stop offset=".16" stop-color="#1e2236"/><stop offset=".35" stop-color="#22408a"/><stop offset=".55" stop-color="#4a88d0"/><stop offset=".7" stop-color="#6a80a0"/><stop offset="1" stop-color="#2a2018"/></linearGradient>
<radialGradient id="r3"><stop offset="0" stop-color="#e0f0ff"/><stop offset=".35" stop-color="#80b8f0" stop-opacity=".8"/><stop offset="1" stop-color="#3a6ac0" stop-opacity="0"/></radialGradient>
</defs>
<rect width="87" height="102" fill="url(#g3)"/>
<ellipse cx="44" cy="50" rx="30" ry="20" fill="url(#r3)"/>
<path d="M0 62 L12 54 L24 60 L40 52 L55 60 L70 53 L87 58 L87 90 L0 90Z" fill="#8a9ab0" opacity=".75"/>
<path d="M0 70 L18 64 L34 72 L52 66 L70 72 L87 68 L87 90 L0 90Z" fill="#4a5060"/>
<path d="M0 78 L25 74 L45 82 L65 76 L87 82 L87 90 L0 90Z" fill="#7a5a38" opacity=".8"/>
<rect y="88" width="87" height="14" fill="#1e160e"/>
<text x="8" y="14" font-family="Liberation Serif" font-size="10.5" fill="#b08a50" font-weight="bold" letter-spacing="0.3">OVNIMOON</text>
<rect x="20" y="93" width="47" height="3" fill="#7a6048" opacity=".6"/>
</svg>
<div class="st" style="top:4.2px"><b>Ovnimoon - Touch The Stars</b></div>
<div class="st" style="top:11.2px"><b>Family Of Light</b></div>
<div class="st" style="top:18.5px">2008</div>
<div class="st" style="top:25.8px">Track 3/8</div>
<div class="st" style="top:33.0px">Goa</div>
<div class="st" style="top:40.2px">00:07:57.41</div>
</div>
<div class="sr" style="top:185.25px">
<svg class="art" width="43.5" height="51" viewBox="0 0 87 102" preserveAspectRatio="none"><defs></defs>
<rect width="87" height="102" fill="#fbfbfb"/>
<text x="43.5" y="20" text-anchor="middle" font-family="Liberation Serif" font-size="10" fill="#7a7a7a" letter-spacing="0.4">LIQUID SOUL</text>
<rect x="28" y="24" width="31" height="1.2" fill="#bbb"/>
<g transform="translate(43.5 58) scale(0.78 0.85) translate(-43.5 -58)">
<path d="M43.5 90 C20 74 10 62 10 47 C10 34 20 28 30 30 C36 31 41 35 43.5 39 C46 35 51 31 57 30 C67 28 77 34 77 47 C77 62 67 74 43.5 90Z" fill="#d0d0d0" stroke="#8a8a8a" stroke-width="1.5"/>
<path d="M43.5 84 C25 72 16 62 16 49 C16 38 25 33 32 35 C37 36 41 39 43.5 43 C46 39 50 36 55 35 C62 33 71 38 71 49 C71 62 62 72 43.5 84Z" fill="#161616"/>
<path d="M43.5 79 C28 69 21 61 21 50 C21 41 28 38 33 39 C38 40 41 43 43.5 46 C46 43 49 40 54 39 C59 38 66 41 66 50 C66 61 59 69 43.5 79Z" fill="#b01616"/>
<ellipse cx="43" cy="54" rx="9" ry="9" fill="#e04848" opacity=".6"/>
</g>
</svg>
<div class="st" style="top:4.2px"><b>Liquid Soul - Sweet Things</b></div>
<div class="st" style="top:11.2px"><b>Love In Stereo</b></div>
<div class="st" style="top:18.5px">2008</div>
<div class="st" style="top:25.8px">Track 7/8</div>
<div class="st" style="top:33.0px">Goa</div>
<div class="st" style="top:40.2px">00:08:33.18</div>
</div>
<div class="sr" style="top:243.00px">
<svg class="art" width="43.5" height="51" viewBox="0 0 87 102" preserveAspectRatio="none"><defs></defs>
<rect width="87" height="102" fill="#1a1a1c"/>
<path d="M0 8 Q30 -2 60 18 T87 12 L87 28 Q50 38 20 22 T0 32Z" fill="#3c3c40" opacity=".7"/>
<path d="M0 78 Q30 68 60 88 T87 82 L87 96 Q50 102 20 92 T0 100Z" fill="#35353a" opacity=".6"/>
<g transform="rotate(-10 43 52)" font-family="Liberation Sans" font-style="italic" font-weight="bold" fill="#f03a24" stroke="#f8d8c0" stroke-width="1.6" paint-order="stroke fill">
<text x="9" y="48" font-size="29" letter-spacing="-0.8">daft</text>
<text x="3" y="75" font-size="29" letter-spacing="-1.2">punk</text>
</g>
</svg>
<div class="st" style="top:4.2px"><b>Daft Punk - Indo Silver Club</b></div>
<div class="st" style="top:11.2px"><b>Homework</b></div>
<div class="st" style="top:18.5px">1996 Copyright &copy; Daft Trax</div>
<div class="st" style="top:25.8px">Track 14/0</div>
<div class="st" style="top:33.0px">Electronic</div>
<div class="st" style="top:40.2px">00:04:34.73</div>
</div>
<div class="sr" style="top:300.75px">
<svg class="art" width="43.5" height="51" viewBox="0 0 87 102" preserveAspectRatio="none"><defs></defs>
<rect width="87" height="102" fill="#f2f2f4"/>
<rect x="30" y="10" width="27" height="1.5" fill="#b8c8d8"/>
<g stroke="#5a2418" stroke-width="3.4" fill="none" stroke-linecap="round">
<path d="M43 50 Q30 56 18 70"/><path d="M43 50 Q58 58 70 70"/><path d="M43 50 Q24 50 14 58"/><path d="M43 50 Q62 48 74 58"/>
<path d="M43 52 Q36 68 30 80"/><path d="M43 52 Q50 68 56 80"/><path d="M43 52 Q43 70 44 84"/>
<path d="M40 46 L32 22"/><path d="M44 46 L44 20"/><path d="M47 46 L55 22"/><path d="M42 46 L38 21"/><path d="M46 46 L50 21"/>
</g>
<ellipse cx="43" cy="50" rx="12" ry="9" fill="#3a1410"/><ellipse cx="43" cy="52" rx="22" ry="12" fill="#8a4a30" opacity=".35"/>
<ellipse cx="43" cy="38" rx="3" ry="6" fill="#6a90d0" opacity=".8"/>
</svg>
<div class="st" style="top:4.2px"><b>Frechbax - Suendenbock</b></div>
<div class="st" style="top:11.2px"><b>Frech</b></div>
<div class="st" style="top:18.5px">2005</div>
<div class="st" style="top:25.8px">Goa</div>
<div class="st" style="top:33.0px">00:07:46.36</div>
</div>
<div class="sr" style="top:358.50px">
<svg class="art" width="43.5" height="51" viewBox="0 0 87 102" preserveAspectRatio="none"><defs>
<linearGradient id="g7" x1="0" y1="0" x2="1" y2="1"><stop offset="0" stop-color="#7a3aa0"/><stop offset=".3" stop-color="#c84a50"/><stop offset=".55" stop-color="#4a6ad0"/><stop offset=".8" stop-color="#80a0d8"/><stop offset="1" stop-color="#d8a040"/></linearGradient>
<linearGradient id="g7b" x1="0" y1="0" x2="0" y2="1"><stop offset="0" stop-color="#d02020"/><stop offset=".38" stop-color="#c03020"/><stop offset=".48" stop-color="#f0d030"/><stop offset=".56" stop-color="#2040a0"/><stop offset=".65" stop-color="#48a040"/><stop offset="1" stop-color="#3a8a3a"/></linearGradient>
</defs>
<rect width="87" height="102" fill="url(#g7)"/>
<polygon points="43.5,14 68,24 78,48 72,78 50,96 28,96 12,78 8,48 18,24" fill="#fff"/>
<polygon points="43.5,18 65,27 74,49 68,76 48,92 30,92 15,76 12,49 21,27" fill="url(#g7b)"/>
<ellipse cx="40" cy="47" rx="18" ry="7" fill="#f8e040"/>
<rect x="36" y="58" width="8" height="22" fill="#8ab0e0" opacity=".8"/>
</svg>
<div class="st" style="top:4.2px"><b>Ozric Tentacles - Ghedengi</b></div>
<div class="st" style="top:11.2px"><b>Ghedengi</b></div>
<div class="st" style="top:18.5px">2003.10.14 Copyright &copy; 1999 Snapper Music</div>
<div class="st" style="top:25.8px">Track 3/0</div>
<div class="st" style="top:33.0px">Psychedelic Rock</div>
<div class="st" style="top:40.2px">00:05:41.38</div>
</div>
  </div>
</div>
<div id="vscroll" class="a">
  <div class="a" style="left:0.8px;top:7px;width:4.6px;height:283px;background:#cdcdcd"></div>
  <svg class="a" style="left:0;top:0" width="6" height="393" viewBox="0 0 6 393"><path d="M1.6 3.8 L3 2.4 L4.4 3.8" fill="none" stroke="#606060" stroke-width=".6"/><path d="M1.6 388.6 L3 390 L4.4 388.6" fill="none" stroke="#606060" stroke-width=".6"/></svg>
</div>
<div id="winr" class="a"></div>
<div id="status" class="a">
  <div class="t" style="left:2px">Hold down CTRL or SHIFT to select multiple files.</div>
  <div class="t" style="left:418px">9 files</div>
  <div class="t" style="left:494px">MP4 Video &amp; Audio Tag Editor 1.0.240.433 tagged 18 files</div>
</div>
<div id="dlg" class="a" style="left:298.5px;top:159.5px;width:410px;height:308px;background:#f0f0f0;box-shadow:0 0 0 0.7px #3d8bd6,0 1px 4px rgba(0,0,0,.3)">
<div class="a" style="left:0;top:0;width:410px;height:14px;background:#0a78d4"></div>
<div class="a" style="left:0;top:14px;width:410px;height:2px;background:#fafafa"></div>
<div class="a" style="left:5px;top:3.5px;width:2.6px;height:6.5px;border:0.9px solid #fff;border-radius:1.5px;transform:rotate(-40deg)"></div>
<div class="t" style="left:11.5px;top:4.8px;color:#fff;font-size:5.2px;letter-spacing:-0.47px">Edit MP4 Tag Details for Ozric Tentacles - Pixel dream.m4a</div>
<svg class="a" style="left:359.5px;top:0" width="50" height="13.5" viewBox="0 0 50 13.5"><path d="M4.5 7 H9.5" stroke="#fff" stroke-width=".6"/><rect x="22.3" y="4.6" width="4.2" height="4.6" fill="none" stroke="#fff" stroke-width=".6"/><path d="M39.2 4.5 L43.8 9.1 M43.8 4.5 L39.2 9.1" stroke="#fff" stroke-width=".6"/></svg>
<div class="t" style="left:4.5px;top:15.1px;font-weight:bold;letter-spacing:-0.3px">Options:</div>
<div class="a" style="left:6.0px;top:26.6px;width:6px;height:6.5px;background:linear-gradient(#f6e07a,#e2b43a);border-radius:1px"></div><div class="a" style="left:6.5px;top:26.3px;width:3px;height:3.4px;border-radius:50%;background:#7cc040"></div>
<div class="t" style="left:13.5px;top:27.5px">Import...</div>
<div class="a" style="left:35.5px;top:26.6px;width:6px;height:6.8px;background:#3c3ca8;border-radius:0.5px"></div><div class="a" style="left:36.8px;top:26.6px;width:3.4px;height:2.6px;background:#e8e8f8"></div>
<div class="t" style="left:42.5px;top:27.5px">Export...</div>
<div class="a" style="left:65.0px;top:24.8px;width:0.6px;height:10px;background:#c8c8c8"></div>
<div class="a" style="left:68.5px;top:26.1px;width:4.8px;height:6px;background:#fff;border:0.5px solid #a8b8c8"></div><div class="a" style="left:70.0px;top:27.9px;width:4.8px;height:6px;background:#eef4fb;border:0.5px solid #8ca0b8"></div>
<div class="t" style="left:75.5px;top:27.5px">Copy</div>
<div class="a" style="left:90.5px;top:26.1px;width:5.6px;height:7.6px;background:#ecd08a;border:0.5px solid #b89a50;border-radius:0.6px"></div><div class="a" style="left:92.5px;top:28.1px;width:4px;height:5.6px;background:#fff;border:0.5px solid #aaa"></div>
<div class="t" style="left:99.5px;top:27.5px">Paste</div>
<div class="a" style="left:113.5px;top:24.8px;width:0.6px;height:10px;background:#c8c8c8"></div>
<div class="a" style="left:116.5px;top:26.6px;width:5.5px;height:6.6px;background:linear-gradient(#6a98e0,#2a4aa8);border-radius:1px"></div>
<div class="t" style="left:124.5px;top:27.5px">Guess tags</div>
<div class="a" style="left:149.5px;top:26.1px;width:6px;height:6px;border-radius:50%;background:radial-gradient(circle at 40% 35%,#9ee0a0,#2a8ad0 55%,#1a5a9a)"></div>
<div class="t" style="left:156.5px;top:27.5px">Get tags from The Movie DB...</div>
<div class="a" style="left:216.5px;top:26.1px;width:6px;height:6px;border-radius:50%;background:radial-gradient(circle at 40% 35%,#9ee0a0,#2a8ad0 55%,#1a5a9a)"></div>
<div class="t" style="left:223.5px;top:27.5px">IMDB Look-Up...</div>
<div class="a" style="left:257.5px;top:24.8px;width:0.6px;height:10px;background:#c8c8c8"></div>
<div class="a" style="left:261.0px;top:29.6px;width:6px;height:1.4px;background:#d42020;transform:rotate(45deg)"></div><div class="a" style="left:261.0px;top:29.6px;width:6px;height:1.4px;background:#d42020;transform:rotate(-45deg)"></div>
<div class="t" style="left:268.5px;top:27.5px">Clear all fields</div>
<div class="a" style="left:298.5px;top:24.8px;width:0.6px;height:10px;background:#c8c8c8"></div>
<i class="br" style="left:302.5px;top:26.6px"></i>
<div class="a" style="left:317.0px;top:27.1px;width:5.4px;height:5.4px;background:#fff;border:0.6px solid #555"></div>
<div class="t" style="left:324.5px;top:27.5px">Title from file name</div>
<div class="a" style="left:5.0px;top:39.3px;width:26px;height:13px;background:#fff;box-shadow:0 0 0 0.6px #d6d6d6"></div>
<div class="t tab" style="left:8.5px;top:43.7px">Basic info</div>
<div class="t tab" style="left:32.5px;top:43.7px">Video info</div>
<div class="t tab" style="left:57.5px;top:43.7px">Actors</div>
<div class="t tab" style="left:76.5px;top:43.7px">Involved people (video)</div>
<div class="t tab" style="left:132.5px;top:43.7px">Involved people</div>
<div class="t tab" style="left:171.5px;top:43.7px">Comments and description</div>
<div class="t tab" style="left:232.5px;top:43.7px">Lyrics</div>
<div class="t tab" style="left:250.5px;top:43.7px">Sort order</div>
<div class="t tab" style="left:277.5px;top:43.7px">Podcast</div>
<div class="t tab" style="left:298.5px;top:43.7px">Purchase info</div>
<div class="t tab" style="left:331.5px;top:43.7px">Cover art</div>
<div class="t tab" style="left:356.5px;top:43.7px">All atoms</div>
<div class="t tab" style="left:380.5px;top:43.7px">Xtra atoms</div>
<div class="a" style="left:5.5px;top:51.5px;width:398px;height:230px;background:#fff;box-shadow:0 0 0 0.6px #d6d6d6"></div>
<div class="a" style="left:5.4px;top:50.0px;width:26.2px;height:2px;background:#fff"></div>
<div class="t lb" style="left:11.0px;top:60.3px">Artist:</div>
<div class="a fld" style="left:42.5px;top:57.7px;width:344.5px;height:10px"></div>
<div class="t" style="left:44.0px;top:60.3px">Ozric Tentacles</div>
<i class="br" style="left:391.0px;top:59.5px"></i>
<div class="t lb" style="left:11.0px;top:72.48px">Album artist:</div>
<div class="a fld" style="left:42.5px;top:69.88px;width:344.5px;height:10px"></div>
<div class="t" style="left:44.0px;top:72.48px">Ozric Tentacles</div>
<i class="br" style="left:391.0px;top:71.68px"></i>
<div class="t lb" style="left:11.0px;top:84.66px">Composer:</div>
<div class="a fld" style="left:42.5px;top:82.06px;width:344.5px;height:10px"></div>
<i class="br" style="left:391.0px;top:83.86px"></i>
<div class="t lb" style="left:11.0px;top:96.84px">Title:</div>
<div class="a fld" style="left:42.5px;top:94.24px;width:344.5px;height:10px"></div>
<div class="t" style="left:44.0px;top:96.84px">Pixel Dream</div>
<i class="br" style="left:391.0px;top:96.04px"></i>
<div class="t lb" style="left:11.0px;top:109.02px">Album:</div>
<div class="a fld" style="left:42.5px;top:106.42px;width:344.5px;height:10px"></div>
<div class="t" style="left:44.0px;top:109.02px">The Hidden Step</div>
<i class="br" style="left:391.0px;top:108.22px"></i>
<div class="t lb" style="left:11.0px;top:121.2px">Genre:</div>
<div class="a fld" style="left:42.5px;top:118.6px;width:344.5px;height:10px"></div>
<div class="t" style="left:44.0px;top:121.2px">Psychedelic Rock</div>
<div class="dd" style="left:382.0px;top:121.4px"></div>
<i class="br" style="left:391.0px;top:120.4px"></i>
<div class="t lb" style="left:11.0px;top:133.38px">Copyright:</div>
<div class="a fld" style="left:42.5px;top:130.78px;width:344.5px;height:10px"></div>
<div class="t" style="left:44.0px;top:133.38px">2000 Snapper Music</div>
<i class="br" style="left:391.0px;top:132.58px"></i>
<div class="t lb" style="left:11.0px;top:145.56px">Grouping:</div>
<div class="a fld" style="left:42.5px;top:142.96px;width:344.5px;height:10px"></div>
<i class="br" style="left:391.0px;top:144.76px"></i>
<div class="t lb" style="left:11.0px;top:157.74px">Studio:</div>
<div class="a fld" style="left:42.5px;top:155.14px;width:344.5px;height:10px"></div>
<i class="br" style="left:391.0px;top:156.94px"></i>
<div class="t lb" style="left:11.0px;top:169.92px">Encoded by:</div>
<div class="a fld" style="left:42.5px;top:167.32px;width:344.5px;height:10px"></div>
<i class="br" style="left:391.0px;top:169.12px"></i>
<div class="t lb" style="left:11.0px;top:182.1px">Encoder tool:</div>
<div class="a fld" style="left:42.5px;top:179.5px;width:344.5px;height:10px"></div>
<i class="br" style="left:391.0px;top:181.3px"></i>
<div class="t lb" style="left:11.0px;top:194.28px">Media:</div>
<div class="a fld" style="left:42.5px;top:191.68px;width:344.5px;height:10px"></div>
<div class="dd" style="left:382.0px;top:194.48px"></div>
<i class="br" style="left:391.0px;top:193.48px"></i>
<div class="t lb" style="left:11.0px;top:206.46px">Content rating:</div>
<div class="a fld" style="left:42.5px;top:203.86px;width:344.5px;height:10px"></div>
<div class="t" style="left:44.0px;top:206.46px">None</div>
<div class="dd" style="left:382.0px;top:206.66px"></div>
<i class="br" style="left:391.0px;top:205.66px"></i>
<div class="t lb" style="left:11.0px;top:218.3px">Recording date:</div>
<div class="a fld" style="left:42.5px;top:215.7px;width:25px;height:10px"></div>
<svg class="a" style="left:62.1px;top:216.4px" width="4.8" height="8.6" viewBox="0 0 4.8 8.6"><rect x="0" y="0" width="4.8" height="8.6" fill="#f0f0f0"/><path d="M0.9 3.5 L2.4 1.2 L3.9 3.5Z M0.9 5.1 L2.4 7.4 L3.9 5.1Z" fill="#111"/></svg>
<div class="t" style="left:44.0px;top:218.3px">0</div>
<div class="t lb" style="left:69.5px;top:218.3px">Month:</div>
<div class="a fld" style="left:84.5px;top:215.7px;width:25px;height:10px"></div>
<svg class="a" style="left:104.1px;top:216.4px" width="4.8" height="8.6" viewBox="0 0 4.8 8.6"><rect x="0" y="0" width="4.8" height="8.6" fill="#f0f0f0"/><path d="M0.9 3.5 L2.4 1.2 L3.9 3.5Z M0.9 5.1 L2.4 7.4 L3.9 5.1Z" fill="#111"/></svg>
<div class="t" style="left:86.0px;top:218.3px">0</div>
<div class="t lb" style="left:111.5px;top:218.3px">Day:</div>
<div class="a fld" style="left:122.5px;top:215.7px;width:25px;height:10px"></div>
<svg class="a" style="left:142.1px;top:216.4px" width="4.8" height="8.6" viewBox="0 0 4.8 8.6"><rect x="0" y="0" width="4.8" height="8.6" fill="#f0f0f0"/><path d="M0.9 3.5 L2.4 1.2 L3.9 3.5Z M0.9 5.1 L2.4 7.4 L3.9 5.1Z" fill="#111"/></svg>
<div class="t" style="left:124.0px;top:218.3px">0</div>
<div class="t lb" style="left:150.5px;top:218.3px">Hour:</div>
<div class="a fld" style="left:162.5px;top:215.7px;width:25px;height:10px"></div>
<svg class="a" style="left:182.1px;top:216.4px" width="4.8" height="8.6" viewBox="0 0 4.8 8.6"><rect x="0" y="0" width="4.8" height="8.6" fill="#f0f0f0"/><path d="M0.9 3.5 L2.4 1.2 L3.9 3.5Z M0.9 5.1 L2.4 7.4 L3.9 5.1Z" fill="#111"/></svg>
<div class="t" style="left:164.0px;top:218.3px">-1</div>
<div class="t lb" style="left:189.5px;top:218.3px">Minute:</div>
<div class="a fld" style="left:205.5px;top:215.7px;width:25px;height:10px"></div>
<svg class="a" style="left:225.1px;top:216.4px" width="4.8" height="8.6" viewBox="0 0 4.8 8.6"><rect x="0" y="0" width="4.8" height="8.6" fill="#f0f0f0"/><path d="M0.9 3.5 L2.4 1.2 L3.9 3.5Z M0.9 5.1 L2.4 7.4 L3.9 5.1Z" fill="#111"/></svg>
<div class="t" style="left:207.0px;top:218.3px">-1</div>
<div class="t lb" style="left:232.5px;top:218.3px">Second:</div>
<div class="a fld" style="left:249.5px;top:215.7px;width:25px;height:10px"></div>
<svg class="a" style="left:269.1px;top:216.4px" width="4.8" height="8.6" viewBox="0 0 4.8 8.6"><rect x="0" y="0" width="4.8" height="8.6" fill="#f0f0f0"/><path d="M0.9 3.5 L2.4 1.2 L3.9 3.5Z M0.9 5.1 L2.4 7.4 L3.9 5.1Z" fill="#111"/></svg>
<div class="t" style="left:251.0px;top:218.3px">-1</div>
<div class="t lb" style="left:277.5px;top:218.3px">Ms:</div>
<div class="a fld" style="left:285.5px;top:215.7px;width:25px;height:10px"></div>
<svg class="a" style="left:305.1px;top:216.4px" width="4.8" height="8.6" viewBox="0 0 4.8 8.6"><rect x="0" y="0" width="4.8" height="8.6" fill="#f0f0f0"/><path d="M0.9 3.5 L2.4 1.2 L3.9 3.5Z M0.9 5.1 L2.4 7.4 L3.9 5.1Z" fill="#111"/></svg>
<div class="t" style="left:287.0px;top:218.3px">-1</div>
<i class="br" style="left:315.5px;top:217.5px"></i>
<div class="t lb" style="left:11.0px;top:230.72px">Release date:</div>
<div class="a fld" style="left:42.5px;top:228.12px;width:25px;height:10px"></div>
<svg class="a" style="left:62.1px;top:228.82px" width="4.8" height="8.6" viewBox="0 0 4.8 8.6"><rect x="0" y="0" width="4.8" height="8.6" fill="#f0f0f0"/><path d="M0.9 3.5 L2.4 1.2 L3.9 3.5Z M0.9 5.1 L2.4 7.4 L3.9 5.1Z" fill="#111"/></svg>
<div class="t" style="left:44.0px;top:230.72px">2004</div>
<div class="t lb" style="left:69.5px;top:230.72px">Month:</div>
<div class="a fld" style="left:84.5px;top:228.12px;width:25px;height:10px"></div>
<svg class="a" style="left:104.1px;top:228.82px" width="4.8" height="8.6" viewBox="0 0 4.8 8.6"><rect x="0" y="0" width="4.8" height="8.6" fill="#f0f0f0"/><path d="M0.9 3.5 L2.4 1.2 L3.9 3.5Z M0.9 5.1 L2.4 7.4 L3.9 5.1Z" fill="#111"/></svg>
<div class="t" style="left:86.0px;top:230.72px">3</div>
<div class="t lb" style="left:111.5px;top:230.72px">Day:</div>
<div class="a fld" style="left:122.5px;top:228.12px;width:25px;height:10px"></div>
<svg class="a" style="left:142.1px;top:228.82px" width="4.8" height="8.6" viewBox="0 0 4.8 8.6"><rect x="0" y="0" width="4.8" height="8.6" fill="#f0f0f0"/><path d="M0.9 3.5 L2.4 1.2 L3.9 3.5Z M0.9 5.1 L2.4 7.4 L3.9 5.1Z" fill="#111"/></svg>
<div class="t" style="left:124.0px;top:230.72px">9</div>
<i class="br" style="left:151.5px;top:229.92px"></i>
<div class="t lb" style="left:193.5px;top:230.72px">Tags:</div>
<div class="a fld" style="left:205.5px;top:228.12px;width:181.5px;height:10px"></div>
<i class="br" style="left:391.0px;top:229.92px"></i>
<div class="t lb" style="left:11.0px;top:243.14px">Track:</div>
<div class="a fld" style="left:42.5px;top:240.54px;width:25px;height:10px"></div>
<svg class="a" style="left:62.1px;top:241.24px" width="4.8" height="8.6" viewBox="0 0 4.8 8.6"><rect x="0" y="0" width="4.8" height="8.6" fill="#f0f0f0"/><path d="M0.9 3.5 L2.4 1.2 L3.9 3.5Z M0.9 5.1 L2.4 7.4 L3.9 5.1Z" fill="#111"/></svg>
<div class="t" style="left:44.0px;top:243.14px">5</div>
<div class="t lb" style="left:69.5px;top:243.14px">Total Tracks:</div>
<div class="a fld" style="left:95.5px;top:240.54px;width:25px;height:10px"></div>
<svg class="a" style="left:115.1px;top:241.24px" width="4.8" height="8.6" viewBox="0 0 4.8 8.6"><rect x="0" y="0" width="4.8" height="8.6" fill="#f0f0f0"/><path d="M0.9 3.5 L2.4 1.2 L3.9 3.5Z M0.9 5.1 L2.4 7.4 L3.9 5.1Z" fill="#111"/></svg>
<div class="t" style="left:97.0px;top:243.14px">0</div>
<i class="br" style="left:125.5px;top:242.34px"></i>
<div class="a" style="left:138.0px;top:242.54px;width:5.4px;height:5.4px;background:#fff;border:0.6px solid #555"></div>
<div class="t" style="left:144.5px;top:243.14px">Gapless playback</div>
<i class="br" style="left:189.0px;top:242.34px"></i>
<div class="t" style="left:212.0px;top:243.34px">Separate tags with a ; eg.: tag1;tag2;tag3</div>
<div class="t lb" style="left:11.0px;top:255.56px">CD:</div>
<div class="a fld" style="left:42.5px;top:252.96px;width:25px;height:10px"></div>
<svg class="a" style="left:62.1px;top:253.66px" width="4.8" height="8.6" viewBox="0 0 4.8 8.6"><rect x="0" y="0" width="4.8" height="8.6" fill="#f0f0f0"/><path d="M0.9 3.5 L2.4 1.2 L3.9 3.5Z M0.9 5.1 L2.4 7.4 L3.9 5.1Z" fill="#111"/></svg>
<div class="t" style="left:44.0px;top:255.56px">0</div>
<div class="t lb" style="left:69.5px;top:255.56px">Total CDs:</div>
<div class="a fld" style="left:95.5px;top:252.96px;width:25px;height:10px"></div>
<svg class="a" style="left:115.1px;top:253.66px" width="4.8" height="8.6" viewBox="0 0 4.8 8.6"><rect x="0" y="0" width="4.8" height="8.6" fill="#f0f0f0"/><path d="M0.9 3.5 L2.4 1.2 L3.9 3.5Z M0.9 5.1 L2.4 7.4 L3.9 5.1Z" fill="#111"/></svg>
<div class="t" style="left:97.0px;top:255.56px">0</div>
<i class="br" style="left:125.5px;top:254.76px"></i>
<div class="a" style="left:138.0px;top:254.96px;width:5.4px;height:5.4px;background:#fff;border:0.6px solid #555"></div>
<div class="t" style="left:144.5px;top:255.56px">Part of a compilation</div>
<i class="br" style="left:189.0px;top:254.76px"></i>
<div class="t lb" style="left:11.0px;top:267.98px">BPM:</div>
<div class="a fld" style="left:42.5px;top:265.38px;width:25px;height:10px"></div>
<svg class="a" style="left:62.1px;top:266.08px" width="4.8" height="8.6" viewBox="0 0 4.8 8.6"><rect x="0" y="0" width="4.8" height="8.6" fill="#f0f0f0"/><path d="M0.9 3.5 L2.4 1.2 L3.9 3.5Z M0.9 5.1 L2.4 7.4 L3.9 5.1Z" fill="#111"/></svg>
<div class="t" style="left:44.0px;top:267.98px">0</div>
<i class="br" style="left:71.5px;top:267.18px"></i>
<div class="t lb" style="left:84.5px;top:267.98px">Rating:</div>
<div class="a" style="left:101.5px;top:265.38px;width:81px;height:10px;background:#e3e3e3;border:0.6px solid #b8b8b8"></div>
<svg class="a" style="left:102.3px;top:267.18px" width="30" height="6.5" viewBox="0 0 30 6.5"><polygon transform="translate(0.0 0)" points="3.00,0.15 3.71,2.13 5.81,2.19 4.14,3.47 4.73,5.49 3.00,4.30 1.27,5.49 1.86,3.47 0.19,2.19 2.29,2.13" fill="#0a0a0a"/><polygon transform="translate(5.9 0)" points="3.00,0.15 3.71,2.13 5.81,2.19 4.14,3.47 4.73,5.49 3.00,4.30 1.27,5.49 1.86,3.47 0.19,2.19 2.29,2.13" fill="#0a0a0a"/><polygon transform="translate(11.8 0)" points="3.00,0.15 3.71,2.13 5.81,2.19 4.14,3.47 4.73,5.49 3.00,4.30 1.27,5.49 1.86,3.47 0.19,2.19 2.29,2.13" fill="#0a0a0a"/><polygon transform="translate(17.7 0)" points="3.00,0.15 3.71,2.13 5.81,2.19 4.14,3.47 4.73,5.49 3.00,4.30 1.27,5.49 1.86,3.47 0.19,2.19 2.29,2.13" fill="#0a0a0a"/><polygon transform="translate(23.6 0)" points="3.00,0.15 3.71,2.13 5.81,2.19 4.14,3.47 4.73,5.49 3.00,4.30 1.27,5.49 1.86,3.47 0.19,2.19 2.29,2.13" fill="#0a0a0a"/></svg>
<div class="t" style="left:133.0px;top:267.98px">Awesome</div>
<div class="dd" style="left:177.5px;top:268.18px"></div>
<i class="br" style="left:189.0px;top:267.18px"></i>
<div class="t" style="left:240.5px;top:295.1px;letter-spacing:-0.45px">Padding options:</div>
<div class="a" style="left:273.5px;top:292.3px;width:71px;height:10px;background:#fff;border:0.6px solid #8f8f8f"></div>
<div class="t" style="left:275.0px;top:294.9px;letter-spacing:-0.45px">Create fixed 4096 bytes padding</div>
<div class="dd" style="left:339.5px;top:295.1px"></div>
<div class="a btn" style="left:348.5px;top:291.7px;width:27.5px;height:11.5px"></div>
<div class="t" style="left:357.0px;top:295.1px;font-weight:bold">Save</div>
<div class="a btn" style="left:379.0px;top:291.7px;width:27.5px;height:11.5px"></div>
<div class="t" style="left:385.0px;top:295.1px;font-weight:bold">Cancel</div>
</div>
<div class="a" style="left:300px;top:448px;width:232px;height:19px;background:rgba(246,224,140,.3);filter:blur(1.2px);border-radius:6px"></div>
<div class="t wm" style="-webkit-text-stroke:5.2px #f1d97e;color:#f1d97e;filter:blur(0.5px)">www.AhrefsPC.com</div>
<div class="t wm" style="-webkit-text-stroke:2.1px #808080;color:#808080">www.AhrefsPC.com</div>
<div class="t wm" style="color:#eef5f5;-webkit-text-stroke:0.5px #eef5f5">www.AhrefsPC.com</div>

</body></html>
